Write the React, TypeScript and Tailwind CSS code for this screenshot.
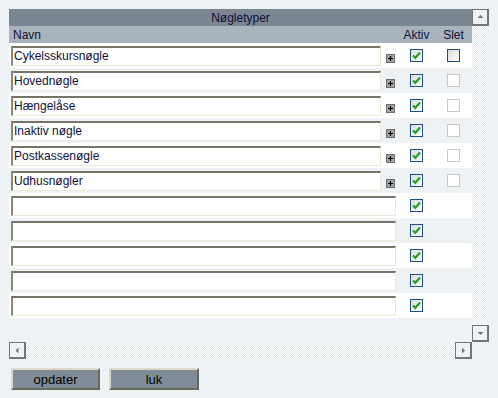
const keys = ["Cykelsskursnøgle", "Hovednøgle", "Hængelåse", "Inaktiv nøgle", "Postkassenøgle", "Udhusnøgler"];

const dither = "bg-[repeating-conic-gradient(#e6eaec_0_25%,#fbfcfc_0_50%)] bg-[length:2px_2px]";

const Check = ({ checked, disabled }: { checked?: boolean; disabled?: boolean }) => (
  <div
    className={
      "w-[13px] h-[13px] border flex items-center justify-center " +
      (disabled ? "border-[#cbc8bf] bg-white" : "border-[#1f4f80] bg-gradient-to-br from-[#dcdcdc] to-white")
    }
  >
    {checked && (
      <svg width="9" height="9" viewBox="0 0 9 9">
        <path d="M1 4.5 L3.3 6.8 L8 1.5" fill="none" stroke="#21a321" strokeWidth="2.2" />
      </svg>
    )}
  </div>
);

const Plus = () => (
  <div className="w-[9px] h-[9px] bg-[#a3a3a3] border border-[#6e6e6e] flex items-center justify-center">
    <svg width="7" height="7" viewBox="0 0 7 7">
      <path d="M3.5 1 V6 M1 3.5 H6" stroke="#000" strokeWidth="1.2" />
    </svg>
  </div>
);

const TextBox = ({ value, wide }: { value: string; wide?: boolean }) => (
  <input
    readOnly
    value={value}
    className={
      (wide ? "w-[385px]" : "w-[370px]") +
      " h-[20px] bg-white border-t-2 border-l-2 border-b border-r border-t-[#77746a] border-l-[#8a877c] border-b-[#ece8d8] border-r-[#ece8d8] pl-[1px] text-[12px] text-[#10103a] outline-none"
    }
  />
);

const ScrollBtn = ({ dir }: { dir: "up" | "down" | "left" | "right" }) => {
  const paths = {
    up: "M1.5 5 L4.5 2 L7.5 5 Z",
    down: "M1.5 3 L4.5 6 L7.5 3 Z",
    left: "M5.5 1.5 L2.5 4.5 L5.5 7.5 Z",
    right: "M3 1.5 L6 4.5 L3 7.5 Z",
  };
  return (
    <div className="w-[17px] h-[17px] shrink-0 bg-[#eef2f4] border border-[#6d7780] border-r-2 border-b-2 flex items-center justify-center">
      <svg width="9" height="9" viewBox="0 0 9 9">
        <path d={paths[dir]} fill="#6d7780" />
      </svg>
    </div>
  );
};

export default function App() {
  const rows = [...keys, "", "", "", "", ""];
  return (
    <div className="w-[498px] h-[398px] bg-[#eef2f4] pt-[9px] pl-[9px] font-['Liberation_Sans',Arial,sans-serif] text-[12px] text-[#10103a]">
      <div className="flex w-[480px] h-[333px]">
        <div className="w-[463px] flex flex-col">
          <div className="h-[17px] bg-[#7a8692] flex items-center justify-center">Nøgletyper</div>
          <div className="h-[17px] bg-[#a8b3bc] flex items-center">
            <div className="w-[392px] pl-[4px]">Navn</div>
            <div className="w-[31px] text-center">Aktiv</div>
            <div className="w-[40px] pl-[3px] text-center">Slet</div>
          </div>
          {rows.map((name, i) => {
            const filled = i < keys.length;
            return (
              <div key={i} className={"h-[25px] flex items-center " + (i % 2 ? "bg-[#eef2f4]" : "bg-white")}>
                <div className="w-[392px] pl-[2px] flex items-center">
                  <TextBox value={name} wide={!filled} />
                  {filled && (
                    <div className="ml-[5px] mt-[6px]">
                      <Plus />
                    </div>
                  )}
                </div>
                <div className="w-[31px] flex justify-center">
                  <Check checked />
                </div>
                <div className="w-[40px] pl-[3px] flex justify-center">
                  {filled && <Check disabled={i > 0} />}
                </div>
              </div>
            );
          })}
        </div>
        <div className="w-[17px] flex flex-col">
          <ScrollBtn dir="up" />
          <div className={"flex-1 " + dither} />
          <ScrollBtn dir="down" />
        </div>
      </div>
      <div className="flex w-[463px] h-[17px]">
        <ScrollBtn dir="left" />
        <div className={"flex-1 " + dither} />
        <ScrollBtn dir="right" />
      </div>
      <div className="flex gap-[9px] mt-[9px] pl-[2px]">
        <button className="w-[89px] h-[22px] bg-[#7f8c97] border-2 border-t-[#dcd8cc] border-l-[#dcd8cc] border-b-[#6a685e] border-r-[#6a685e] text-[13px] text-black">
          opdater
        </button>
        <button className="w-[90px] h-[22px] bg-[#7f8c97] border-2 border-t-[#dcd8cc] border-l-[#dcd8cc] border-b-[#6a685e] border-r-[#6a685e] text-[13px] text-black">
          luk
        </button>
      </div>
    </div>
  );
}
